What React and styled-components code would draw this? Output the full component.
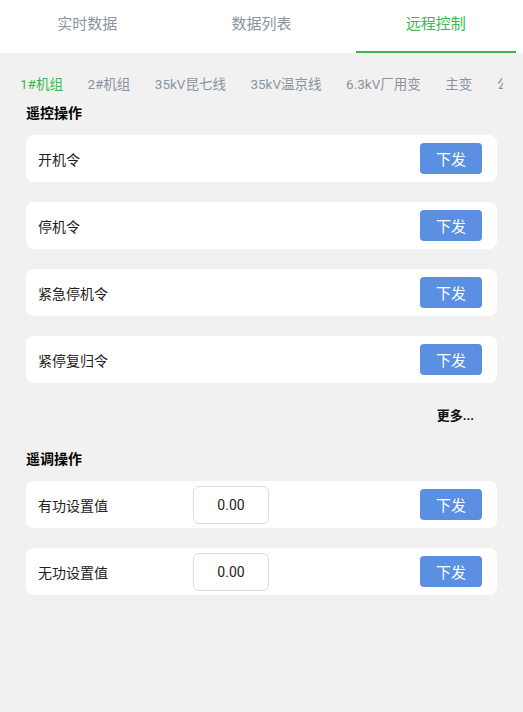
import React from 'react';
import styled, { createGlobalStyle } from 'styled-components';

const Global = createGlobalStyle`
  html, body {
    margin: 0;
    padding: 0;
    background: #f1f1f1;
    font-family: Roboto, "Noto Sans CJK SC", sans-serif;
  }
`;

const Page = styled.div`
  width: 523px;
  min-height: 712px;
  background: #f1f1f1;
  overflow: hidden;
`;

const TabBar = styled.div`
  display: flex;
  height: 53px;
  background: #fff;
`;

const Tab = styled.div`
  flex: 1;
  display: flex;
  align-items: center;
  justify-content: center;
  padding-bottom: 9px;
  font-size: 15px;
  color: ${p => (p.active ? '#39b94b' : '#8a949c')};
  position: relative;
  &::after {
    content: '';
    display: ${p => (p.active ? 'block' : 'none')};
    position: absolute;
    left: 7px;
    right: 7px;
    bottom: 0;
    height: 2px;
    background: #39b94b;
  }
`;

const SubTabWrap = styled.div`
  padding: 20px 20px 0 20px;
`;

const SubTabs = styled.div`
  display: flex;
  height: 20px;
  white-space: nowrap;
  overflow: hidden;
`;

const SubTab = styled.span`
  font-size: 13.5px;
  margin-right: 24.5px;
  flex-shrink: 0;
  color: ${p => (p.active ? '#39b94b' : '#8a949c')};
`;

const Section = styled.div`
  padding: 0 26px;
`;

const Heading = styled.div`
  font-size: 14px;
  font-weight: bold;
  color: #000;
  padding: ${p => (p.first ? '11px 0 13px' : '0 0 13px')};
  line-height: 18px;
`;

const List = styled.div`
  display: flex;
  flex-direction: column;
  gap: 20px;
`;

const Card = styled.div`
  display: flex;
  align-items: center;
  height: 47px;
  background: #fff;
  border-radius: 8px;
  padding: 0 15px 0 12px;
`;

const Label = styled.div`
  font-size: 14px;
  color: #222;
  width: 155px;
  padding-top: 1px;
`;

const Input = styled.div`
  width: 74px;
  height: 36px;
  border: 1px solid #dcdcdc;
  border-radius: 6px;
  display: flex;
  align-items: center;
  justify-content: center;
  font-size: 14px;
  color: #222;
`;

const Send = styled.button`
  margin-left: auto;
  width: 62px;
  height: 31px;
  border: none;
  border-radius: 4px;
  background: #5a8fe2;
  color: #fff;
  font-size: 15px;
  font-family: inherit;
  padding: 0;
`;

const More = styled.div`
  text-align: right;
  font-size: 13px;
  font-weight: bold;
  color: #111;
  padding: 22px 23px 26px 0;
`;

const commands = ['开机令', '停机令', '紧急停机令', '紧停复归令'];
const setpoints = ['有功设置值', '无功设置值'];
const units = ['1#机组', '2#机组', '35kV昆七线', '35kV温京线', '6.3kV厂用变', '主变', '公用'];

export default function App() {
  return (
    <Page>
      <Global />
      <TabBar>
        <Tab>实时数据</Tab>
        <Tab>数据列表</Tab>
        <Tab active>远程控制</Tab>
      </TabBar>
      <SubTabWrap>
        <SubTabs>
          {units.map((u, i) => (
            <SubTab key={u} active={i === 0}>{u}</SubTab>
          ))}
        </SubTabs>
      </SubTabWrap>
      <Section>
        <Heading first>遥控操作</Heading>
        <List>
          {commands.map(c => (
            <Card key={c}>
              <Label>{c}</Label>
              <Send>下发</Send>
            </Card>
          ))}
        </List>
        <More>更多...</More>
        <Heading>遥调操作</Heading>
        <List>
          {setpoints.map(s => (
            <Card key={s}>
              <Label>{s}</Label>
              <Input>0.00</Input>
              <Send>下发</Send>
            </Card>
          ))}
        </List>
      </Section>
    </Page>
  );
}
